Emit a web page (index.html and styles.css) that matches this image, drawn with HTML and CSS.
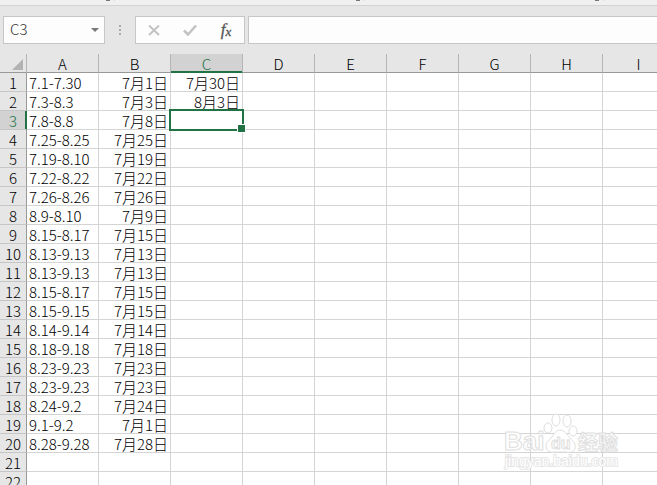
FILE: index.html
```html
<!DOCTYPE html>
<html lang="zh-CN">
<head>
    <meta charset="UTF-8">
    <meta name="viewport" content="width=device-width, initial-scale=1.0">
    <title>Spreadsheet</title>
    <link rel="stylesheet" href="styles.css">
</head>
<body>
    <div class="ribbon-edge">
        <div class="ribbon-group first"></div>
        <div class="ribbon-group"></div>
        <div class="ribbon-group third"></div>
    </div>

    <div class="formula-bar">
        <div class="name-box">
            <input class="name-input" type="text" value="C3" aria-label="Name box">
            <button class="name-arrow" type="button" aria-label="Show names">
                <svg width="8" height="4" viewBox="0 0 8 4"><path d="M0 0h8L4 4z" fill="#777"/></svg>
            </button>
        </div>
        <svg class="grip" width="2" height="10" viewBox="0 0 2 10" fill="#aaa">
            <path d="M0 0h2v2H0zM0 4h2v2H0zM0 8h2v2H0z"/>
        </svg>
        <div class="formula-actions">
            <button type="button" aria-label="Cancel">
                <svg width="12" height="12" viewBox="0 0 12 12"><path d="M1 1.500l10 9.500M11 1.500L1 11" stroke="#c3c3c3" stroke-width="2" fill="none"/></svg>
            </button>
            <button type="button" aria-label="Enter">
                <svg width="14" height="12" viewBox="0 0 14 12"><path d="M1 6.500l4 4L13 1.500" stroke="#c3c3c3" stroke-width="2.600" fill="none"/></svg>
            </button>
            <button class="fx" type="button" aria-label="Insert function">f<span>x</span></button>
        </div>
        <input class="formula-input" type="text" aria-label="Formula">
    </div>

    <div class="sheet">
        <table class="grid">
            <colgroup>
                <col class="head-col">
                <col span="9">
            </colgroup>
            <thead>
                <tr>
                    <th class="corner"><svg width="11" height="11" viewBox="0 0 11 11"><path d="M11 0v11H0z" fill="#b2b2b2"/></svg></th>
                    <th>A</th><th>B</th><th class="active">C</th><th>D</th><th>E</th><th>F</th><th>G</th><th>H</th><th>I</th>
                </tr>
            </thead>
            <tbody>
                <tr><th>1</th><td>7.1-7.30</td><td class="date">7月1日</td><td class="date">7月30日</td><td></td><td></td><td></td><td></td><td></td><td></td></tr>
                <tr><th>2</th><td>7.3-8.3</td><td class="date">7月3日</td><td class="date">8月3日</td><td></td><td></td><td></td><td></td><td></td><td></td></tr>
                <tr><th class="active">3</th><td>7.8-8.8</td><td class="date">7月8日</td><td class="selected"></td><td></td><td></td><td></td><td></td><td></td><td></td></tr>
                <tr><th>4</th><td>7.25-8.25</td><td class="date">7月25日</td><td></td><td></td><td></td><td></td><td></td><td></td><td></td></tr>
                <tr><th>5</th><td>7.19-8.10</td><td class="date">7月19日</td><td></td><td></td><td></td><td></td><td></td><td></td><td></td></tr>
                <tr><th>6</th><td>7.22-8.22</td><td class="date">7月22日</td><td></td><td></td><td></td><td></td><td></td><td></td><td></td></tr>
                <tr><th>7</th><td>7.26-8.26</td><td class="date">7月26日</td><td></td><td></td><td></td><td></td><td></td><td></td><td></td></tr>
                <tr><th>8</th><td>8.9-8.10</td><td class="date">7月9日</td><td></td><td></td><td></td><td></td><td></td><td></td><td></td></tr>
                <tr><th>9</th><td>8.15-8.17</td><td class="date">7月15日</td><td></td><td></td><td></td><td></td><td></td><td></td><td></td></tr>
                <tr><th>10</th><td>8.13-9.13</td><td class="date">7月13日</td><td></td><td></td><td></td><td></td><td></td><td></td><td></td></tr>
                <tr><th>11</th><td>8.13-9.13</td><td class="date">7月13日</td><td></td><td></td><td></td><td></td><td></td><td></td><td></td></tr>
                <tr><th>12</th><td>8.15-8.17</td><td class="date">7月15日</td><td></td><td></td><td></td><td></td><td></td><td></td><td></td></tr>
                <tr><th>13</th><td>8.15-9.15</td><td class="date">7月15日</td><td></td><td></td><td></td><td></td><td></td><td></td><td></td></tr>
                <tr><th>14</th><td>8.14-9.14</td><td class="date">7月14日</td><td></td><td></td><td></td><td></td><td></td><td></td><td></td></tr>
                <tr><th>15</th><td>8.18-9.18</td><td class="date">7月18日</td><td></td><td></td><td></td><td></td><td></td><td></td><td></td></tr>
                <tr><th>16</th><td>8.23-9.23</td><td class="date">7月23日</td><td></td><td></td><td></td><td></td><td></td><td></td><td></td></tr>
                <tr><th>17</th><td>8.23-9.23</td><td class="date">7月23日</td><td></td><td></td><td></td><td></td><td></td><td></td><td></td></tr>
                <tr><th>18</th><td>8.24-9.2</td><td class="date">7月24日</td><td></td><td></td><td></td><td></td><td></td><td></td><td></td></tr>
                <tr><th>19</th><td>9.1-9.2</td><td class="date">7月1日</td><td></td><td></td><td></td><td></td><td></td><td></td><td></td></tr>
                <tr><th>20</th><td>8.28-9.28</td><td class="date">7月28日</td><td></td><td></td><td></td><td></td><td></td><td></td><td></td></tr>
                <tr><th>21</th><td></td><td></td><td></td><td></td><td></td><td></td><td></td><td></td><td></td></tr>
                <tr><th>22</th><td></td><td></td><td></td><td></td><td></td><td></td><td></td><td></td><td></td></tr>
            </tbody>
        </table>
    </div>

    <svg class="watermark" width="120" height="60" viewBox="0 0 120 60">
        <g class="outline">
            <ellipse cx="46" cy="16" rx="4" ry="5"/>
            <ellipse cx="54" cy="8" rx="4" ry="6"/>
            <ellipse cx="65" cy="9" rx="4" ry="6"/>
            <ellipse cx="71" cy="19" rx="4" ry="5"/>
            <path d="M58 18c4 0 7 4 10 8 4 4 6 6 5 10-1 4-5 5-9 4h-11c-5 1-9-1-9-6 0-4 3-6 6-9 2-3 4-7 8-7z"/>
        </g>
        <text class="brand" x="2" y="38">Bai</text>
        <text class="paw-text" x="49" y="37">du</text>
        <text class="brand-cn" x="76" y="38">经验</text>
        <text class="site" x="3" y="54">jingyan.baidu.com</text>
    </svg>
</body>
</html>
```
FILE: styles.css
```css
* {
    margin: 0;
    padding: 0;
    box-sizing: border-box;
}

body {
    font-family: "Noto Sans CJK SC", sans-serif;
    font-size: 15px;
    font-weight: 300;
    color: #000;
    background: #fff;
    position: relative;
    height: 100vh;
    overflow: hidden;
    display: flex;
    flex-direction: column;
}

/* Bottom edge of the ribbon */
.ribbon-edge {
    display: flex;
    flex: none;
    height: 6px;
    background: #f0f0f0;
    border-bottom: 1px solid #d4d4d4;
}

.ribbon-group {
    width: 250px;
    height: 1px;
    border-right: 1px solid #d4d4d4;
    display: flex;
    justify-content: flex-end;
    padding-right: 4px;
}

.ribbon-group.first { width: 115px; }
.ribbon-group.third { width: 239px; }

.ribbon-group::after {
    content: '';
    width: 4px;
    background: #777;
}

/* Formula bar */
.formula-bar {
    display: flex;
    flex: none;
    align-items: center;
    height: 48px;
    padding-left: 3px;
    background: #e6e6e6;
}

.name-box,
.formula-actions,
.formula-input {
    height: 28px;
    background: #fdfdfd;
    border: 1px solid #c6c6c6;
}

.name-box {
    display: flex;
    width: 102px;
}

.name-input {
    flex: 1;
    min-width: 0;
    padding: 0 0 3px 6px;
    border: 0;
    background: none;
    font: inherit;
    color: #333;
    outline: none;
}

button {
    border: 0;
    background: none;
    display: flex;
    align-items: center;
    justify-content: center;
}

.name-arrow { width: 18px; }

.grip { margin: 0 14px; }

.formula-actions {
    display: flex;
    width: 110px;
    margin-right: 3px;
}

.formula-actions button { flex: 1; }

.formula-actions .fx {
    font: italic 17px "Liberation Serif", serif;
    color: #555;
    -webkit-text-stroke: 0.3px #555;
}

.fx span {
    padding-top: 3px;
    font-size: 13px;
}

.formula-input {
    flex: 1;
    min-width: 0;
    padding: 0 6px;
    border-right: 0;
    font: inherit;
    outline: none;
}

/* Grid */
.sheet {
    flex: 1;
    min-height: 0;
    overflow: hidden;
}

.grid {
    width: 675px;
    table-layout: fixed;
    border-collapse: separate;
    border-spacing: 0;
}

.grid col { width: 72px; }
.grid .head-col { width: 27px; }

.grid th,
.grid td {
    height: 19px;
    padding: 2px 2px 0;
    line-height: 16px;
    white-space: nowrap;
    vertical-align: middle;
}

.grid td {
    border-right: 1px solid #d4d4d4;
    border-bottom: 1px solid #d4d4d4;
}

.grid .date { text-align: right; }

.grid th {
    font-weight: 300;
    background: #e6e6e6;
    border-right: 1px solid #999;
    border-bottom: 1px solid #c6c6c6;
}

.grid thead th {
    border-bottom-color: #999;
    border-right-color: #b5b5b5;
}

.grid .corner { padding: 2px 3px 0 0; }

.corner svg {
    display: block;
    margin-left: auto;
}

.grid th.active {
    color: #217346;
    background: #d2d2d2;
}

.grid thead th.active { box-shadow: inset 0 -1px #217346; border-bottom-color: #217346; }
.grid tbody th.active { box-shadow: inset -1px 0 #217346; border-right-color: #217346; }

/* Selected cell with fill handle */
.selected { position: relative; }

.selected::before {
    content: '';
    position: absolute;
    inset: -2px;
    border: 2px solid #217346;
}

.selected::after {
    content: '';
    position: absolute;
    right: -4px;
    bottom: -4px;
    width: 7px;
    height: 7px;
    background: #217346;
    border: 1px solid #fff;
}

/* Watermark */
.watermark {
    position: absolute;
    right: 35px;
    bottom: 13px;
    pointer-events: none;
}

.watermark .outline,
.watermark text {
    fill: #fff;
    stroke: #dedede;
    stroke-width: 1px;
}

.watermark text {
    font-family: "Liberation Sans", "Noto Sans CJK SC", sans-serif;
    font-weight: bold;
}

.brand { font-size: 26px; }
.paw-text { font-size: 16px; }
.brand-cn { font-size: 20px; }

.watermark .site {
    font-size: 14px;
    font-weight: normal;
    paint-order: stroke;
    stroke: #e6e6e6;
    stroke-width: 2px;
}
```
